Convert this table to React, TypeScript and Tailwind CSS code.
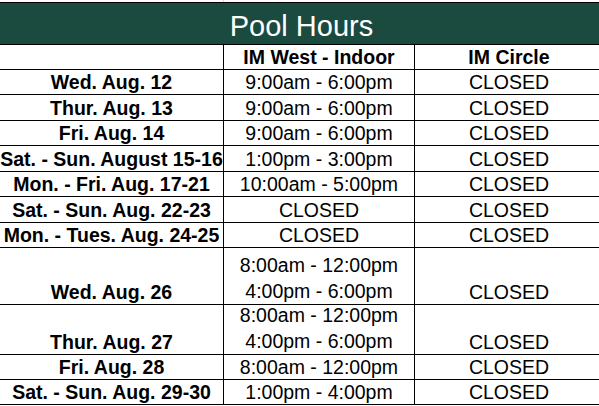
const rows: { day: string; west: string[]; circle: string; h: string }[] = [
  { day: "Wed. Aug. 12", west: ["9:00am - 6:00pm"], circle: "CLOSED", h: "h-[25px]" },
  { day: "Thur. Aug. 13", west: ["9:00am - 6:00pm"], circle: "CLOSED", h: "h-[26px]" },
  { day: "Fri. Aug. 14", west: ["9:00am - 6:00pm"], circle: "CLOSED", h: "h-[25px]" },
  { day: "Sat. - Sun. August 15-16", west: ["1:00pm - 3:00pm"], circle: "CLOSED", h: "h-[26px]" },
  { day: "Mon. - Fri. Aug. 17-21", west: ["10:00am - 5:00pm"], circle: "CLOSED", h: "h-[25px]" },
  { day: "Sat. - Sun. Aug. 22-23", west: ["CLOSED"], circle: "CLOSED", h: "h-[26px]" },
  { day: "Mon. - Tues. Aug. 24-25", west: ["CLOSED"], circle: "CLOSED", h: "h-[25px]" },
  { day: "Wed. Aug. 26", west: ["8:00am - 12:00pm", "4:00pm - 6:00pm"], circle: "CLOSED", h: "h-[57px]" },
  { day: "Thur. Aug. 27", west: ["8:00am - 12:00pm", "4:00pm - 6:00pm"], circle: "CLOSED", h: "h-[50px]" },
  { day: "Fri. Aug. 28", west: ["8:00am - 12:00pm"], circle: "CLOSED", h: "h-[25px]" },
  { day: "Sat. - Sun. Aug. 29-30", west: ["1:00pm - 4:00pm"], circle: "CLOSED", h: "h-[25px]" },
];

const cell = "flex items-end justify-center overflow-hidden whitespace-nowrap";

export default function App() {
  return (
    <div className="h-[406px] w-[599px] overflow-hidden bg-white font-['Liberation_Sans',Arial,sans-serif] text-[19.5px] text-black">
      <div className="w-[603px]">
        {/* faint sheet gridline above the table */}
        <div className="flex h-[2px]">
          <div className="w-[224px] border-r border-[#d9d9d9]" />
        </div>

        <div className="flex h-[43px] items-end justify-center border-y border-black bg-[#1b4a3f] pb-[1px] text-[29px] leading-[34px] text-white">
          Pool Hours
        </div>

        <div className="flex h-[25px] border-b border-black font-bold leading-[24px]">
          <div className={`${cell} w-[224px] border-r border-black`} />
          <div className={`${cell} w-[191px] border-r border-black`}>IM West - Indoor</div>
          <div className={`${cell} flex-1`}>IM Circle</div>
        </div>

        {rows.map((r) => (
          <div key={r.day} className={`flex ${r.h} border-b border-black leading-[24px]`}>
            <div className={`${cell} w-[224px] border-r border-black font-bold`}>{r.day}</div>
            <div
              className={`flex w-[191px] flex-col items-center justify-end overflow-hidden whitespace-nowrap border-r border-black ${
                r.west.length > 1 ? "leading-[25.5px]" : ""
              }`}
            >
              {r.west.map((t) => (
                <span key={t}>{t}</span>
              ))}
            </div>
            <div className={`${cell} flex-1`}>{r.circle}</div>
          </div>
        ))}
      </div>
    </div>
  );
}
